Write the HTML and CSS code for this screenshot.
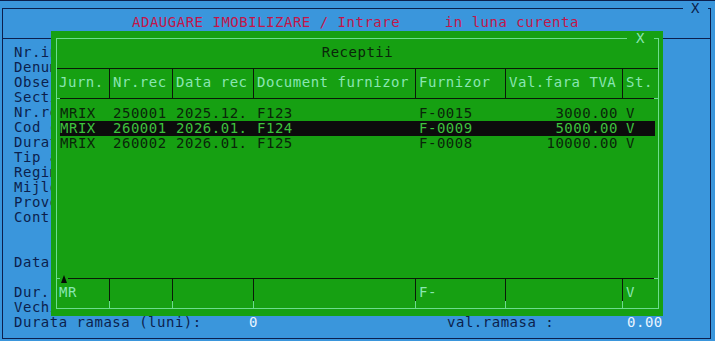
FILE: index.html
```html
<!DOCTYPE html>
<html lang="ro">
<head>
    <meta charset="UTF-8">
    <meta name="viewport" content="width=device-width, initial-scale=1.0">
    <title>Adaugare imobilizare</title>
    <link rel="stylesheet" href="styles.css">
</head>
<body>
    <div class="screen">
        <div class="window">
            <span class="close">X</span>
            <div class="win-title">ADAUGARE IMOBILIZARE / Intrare     in luna curenta</div>
            <div class="form">
                <div class="line">Nr.inventar</div>
                <div class="line">Denumire</div>
                <div class="line">Observatii</div>
                <div class="line">Sectie</div>
                <div class="line">Nr.receptie</div>
                <div class="line">Cod clasificare</div>
                <div class="line">Durata normala</div>
                <div class="line">Tip amortizare</div>
                <div class="line">Regim amortizare</div>
                <div class="line">Mijloc fix</div>
                <div class="line">Provenienta</div>
                <div class="line">Cont</div>
                <div class="line"></div>
                <div class="line"></div>
                <div class="line">Data punerii in functiune</div>
                <div class="line"></div>
                <div class="line">Dur.</div>
                <div class="line">Vechime</div>
                <div class="line sum">
                    <span class="sum-lbl">Durata ramasa (luni):</span>
                    <span class="sum-val">0</span>
                    <span class="sum-lbl2">val.ramasa :</span>
                    <span class="sum-end">0.00</span>
                </div>
            </div>
        </div>

        <!-- Receptii picker window over the form -->
        <div class="picker">
            <div class="frame">
                <span class="close">X</span>
                <div class="picker-title">Receptii</div>
                <div class="rule plain"></div>
                <div class="cols head">
                    <div>Jurn.</div>
                    <div>Nr.rec</div>
                    <div>Data rec</div>
                    <div>Document furnizor</div>
                    <div>Furnizor</div>
                    <div>Val.fara TVA</div>
                    <div>St.</div>
                </div>
                <div class="rule"></div>
                <div class="rows">
                    <div class="row">
                        <div>MRIX</div>
                        <div>250001</div>
                        <div>2025.12.</div>
                        <div>F123</div>
                        <div>F-0015</div>
                        <div class="num">3000.00</div>
                        <div>V</div>
                    </div>
                    <div class="row selected">
                        <div>MRIX</div>
                        <div>260001</div>
                        <div>2026.01.</div>
                        <div>F124</div>
                        <div>F-0009</div>
                        <div class="num">5000.00</div>
                        <div>V</div>
                    </div>
                    <div class="row">
                        <div>MRIX</div>
                        <div>260002</div>
                        <div>2026.01.</div>
                        <div>F125</div>
                        <div>F-0008</div>
                        <div class="num">10000.00</div>
                        <div>V</div>
                    </div>
                </div>
                <div class="foot">
                    <svg class="arrow" width="8" height="10" viewBox="0 0 8 10">
                        <rect width="8" height="10" fill="#16a012"/>
                        <polygon points="1,9 4,1 7,9" fill="#050805"/>
                    </svg>
                    <div class="rule"></div>
                    <div class="cols foot-row">
                        <div>MR</div>
                        <div></div>
                        <div></div>
                        <div></div>
                        <div>F-</div>
                        <div></div>
                        <div>V</div>
                    </div>
                </div>
            </div>
        </div>
    </div>
</body>
</html>
```

FILE: styles.css
```css
body {
    margin: 0;
    padding: 0;
    background: #3a96dc;
    color: #0c1f4d;
    font-family: "DejaVu Sans Mono", monospace;
    font-size: 14px;
    letter-spacing: 0.51px;
}

.screen {
    position: relative;
    width: 715px;
    height: 340px;
    border-top: 1px solid #0c1f4d;
    overflow: hidden;
}

/* blue form window */
.window {
    position: relative;
    box-sizing: border-box;
    width: 709px;
    height: 331px;
    margin: 7px 0 0 2px;
    border: 1px solid #0c1f4d;
}

.close {
    position: absolute;
    top: -8px;
    line-height: 15px;
    white-space: pre;
}

.window .close {
    right: 2px;
    padding: 0 8px;
    background: #3a96dc;
    color: #0c1f4d;
}

.win-title {
    height: 29px;
    line-height: 27px;
    padding-left: 129px;
    border-bottom: 1px solid #0c1f4d;
    color: #c2154a;
    white-space: pre;
}

.form {
    padding: 6px 0 0 11px;
}

.line {
    height: 15px;
    line-height: 15px;
    white-space: pre;
}

.sum {
    display: flex;
}

.sum-lbl {
    width: 235px;
}

.sum-val {
    width: 198px;
    color: #e8f4ff;
}

.sum-lbl2 {
    width: 180px;
}

.sum-end {
    color: #e8f4ff;
}

/* green picker window */
.picker {
    position: absolute;
    left: 51px;
    top: 30px;
    box-sizing: border-box;
    width: 612px;
    height: 285px;
    padding: 7px 4px 7px 5px;
    background: #16a012;
    color: #0a260a;
}

.frame {
    position: relative;
    box-sizing: border-box;
    height: 271px;
    border: 1px solid #6cdc8e;
}

.picker .close {
    right: 4px;
    padding: 0 9px;
    background: #16a012;
    color: #8ae6b2;
}

.picker-title {
    height: 29px;
    padding-top: 6px;
    box-sizing: border-box;
    line-height: 15px;
    text-align: center;
}

.rule {
    height: 1px;
    background: linear-gradient(to right, #6cdc8e 0 3px, #0a1a08 3px calc(100% - 4px), #6cdc8e calc(100% - 4px));
}

.rule.plain {
    background: #0a1a08;
}

.cols {
    display: grid;
    grid-template-columns: 52px 63px 81px 162px 90px 117px 36px;
    height: 29px;
    line-height: 27px;
    color: #8ae6b2;
}

.cols > div {
    padding-left: 3px;
    overflow: hidden;
    white-space: pre;
}

.cols > div:first-child {
    padding-left: 2px;
}

.head > div + div {
    border-left: 1px solid #0a1a08;
}

.foot {
    position: relative;
}

.foot-row > div + div {
    background: linear-gradient(to bottom, #0a1a08 0 22px, #6cdc8e 22px) left top / 1px 100% no-repeat;
    padding-left: 4px;
}

.arrow {
    position: absolute;
    left: 3px;
    top: -4px;
    display: block;
}

.rows {
    height: 179px;
    box-sizing: border-box;
    padding-top: 7px;
}

.row {
    display: grid;
    grid-template-columns: 49px 63px 81px 162px 90px 117px 33px;
    height: 15px;
    margin: 0 3px;
    line-height: 15px;
}

.row > div {
    padding-left: 4px;
    overflow: hidden;
    white-space: pre;
}

.row > div:first-child {
    padding-left: 0;
}

.row .num {
    padding: 0 4px 0 0;
    text-align: right;
}

.row.selected {
    background: #0c0c0c;
    color: #3ec23e;
}
```
